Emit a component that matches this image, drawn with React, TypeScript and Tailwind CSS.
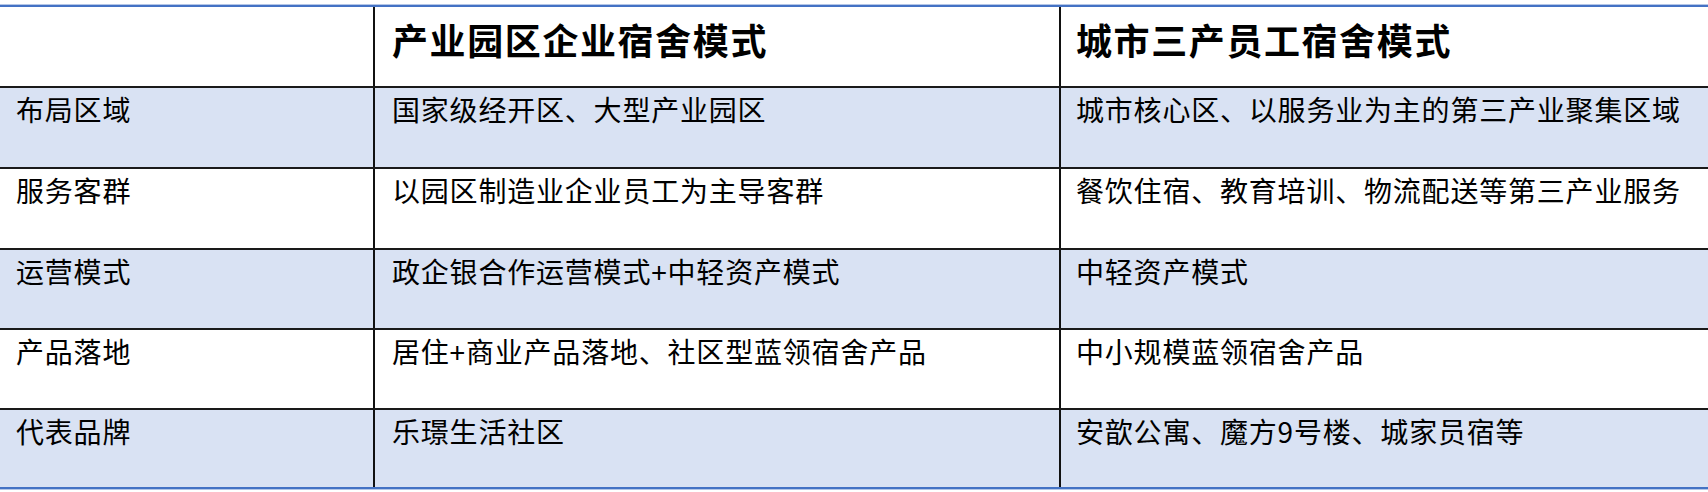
const rows = [
  ["布局区域", "国家级经开区、大型产业园区", "城市核心区、以服务业为主的第三产业聚集区域"],
  ["服务客群", "以园区制造业企业员工为主导客群", "餐饮住宿、教育培训、物流配送等第三产业服务"],
  ["运营模式", "政企银合作运营模式+中轻资产模式", "中轻资产模式"],
  ["产品落地", "居住+商业产品落地、社区型蓝领宿舍产品", "中小规模蓝领宿舍产品"],
  ["代表品牌", "乐璟生活社区", "安歆公寓、魔方9号楼、城家员宿等"],
];

const rowHeights = ["h-[81px]", "h-[81px]", "h-[80px]", "h-[80px]", "h-[79px]"];

export default function App() {
  return (
    <div
      className="w-[1708px] h-[492px] bg-white pt-[4px] text-black"
      style={{ fontFamily: '"Noto Sans CJK SC", "Noto Sans", sans-serif' }}
    >
      <div className="border-t border-[#B4C6E7]">
        <div className="border-t-2 border-[#4472C4]">
          {/* header */}
          <div className="flex h-[81px] border-b-2 border-[#1a1a1a] bg-white">
            <div className="w-[375px] shrink-0 border-r-2 border-[#111]" />
            <div className="w-[686px] shrink-0 border-r-2 border-[#111] pl-[17px] pt-[10px] text-[36px] font-bold leading-[44px] tracking-[1.6px]">
              产业园区企业宿舍模式
            </div>
            <div className="flex-1 pl-[15px] pt-[10px] text-[36px] font-bold leading-[44px] tracking-[1.6px]">
              城市三产员工宿舍模式
            </div>
          </div>
          {/* body */}
          {rows.map((r, i) => {
            const blue = i % 2 === 0;
            const last = i === rows.length - 1;
            return (
              <div
                key={r[0]}
                className={`flex ${rowHeights[i]} ${blue ? "bg-[#D9E2F3]" : "bg-white"} ${
                  last ? "border-b-2 border-[#4472C4]" : "border-b-2 border-[#1a1a1a]"
                }`}
              >
                <div className="w-[375px] shrink-0 border-r-2 border-[#111] pl-[16px] pt-[3px] text-[28px] leading-[36px] tracking-[0.8px]">
                  {r[0]}
                </div>
                <div className="w-[686px] shrink-0 border-r-2 border-[#111] pl-[17px] pt-[3px] text-[28px] leading-[36px] tracking-[0.8px] whitespace-nowrap">
                  {r[1]}
                </div>
                <div className="flex-1 pl-[15px] pt-[3px] text-[28px] leading-[36px] tracking-[0.8px] whitespace-nowrap">
                  {r[2]}
                </div>
              </div>
            );
          })}
          <div className="h-px bg-[#B4C6E7]" />
        </div>
      </div>
    </div>
  );
}
